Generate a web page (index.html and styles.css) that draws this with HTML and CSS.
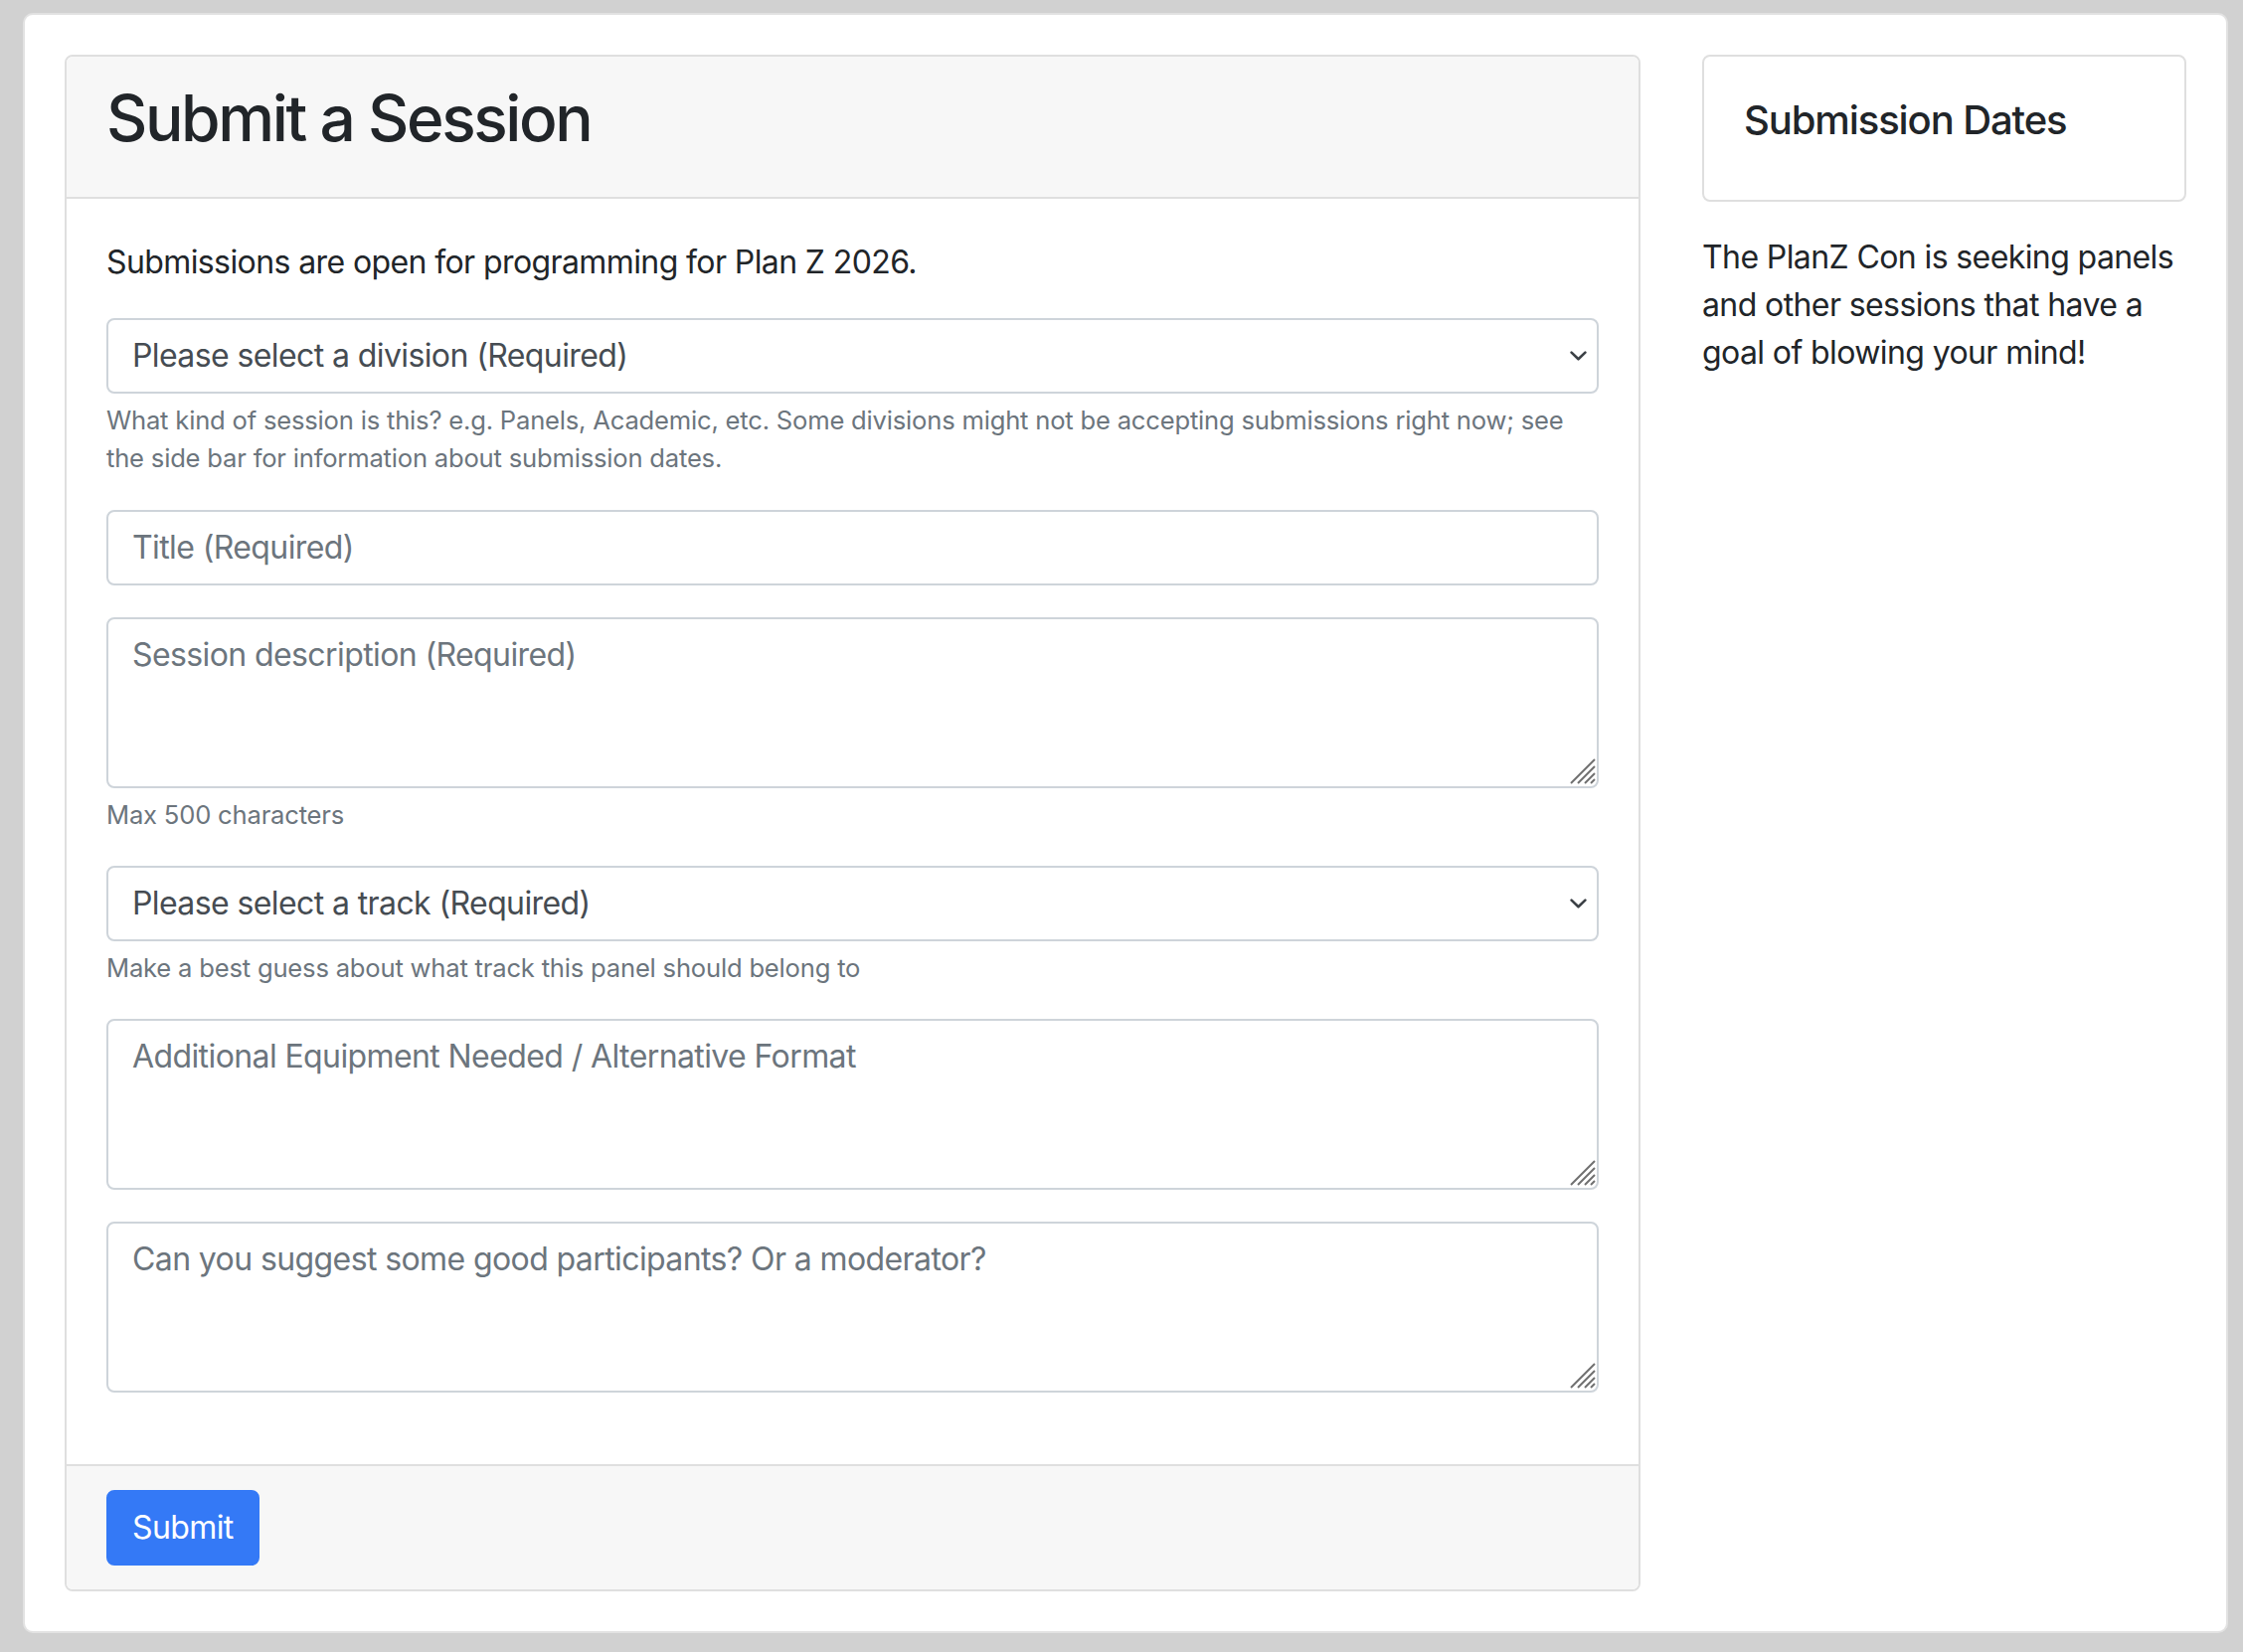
FILE: index.html
```html
<!DOCTYPE html>
<html lang="en">
<head>
<meta charset="utf-8">
<title>Submit a Session</title>
<link rel="stylesheet" href="styles.css">
</head>
<body>
<div class="page">
  <div class="layout">
    <div class="card main-card">
      <div class="card-header">
        <h2 class="page-title">Submit a Session</h2>
      </div>
      <div class="card-body">
        <p class="intro">Submissions are open for programming for Plan Z 2026.</p>
        <div class="group">
          <div class="select">
            <span class="select-text">Please select a division (Required)</span>
            <svg class="chevron" width="17" height="10" viewBox="0 0 17 10"><path d="M1.6 1.6 L8.5 8.3 L15.4 1.6" fill="none" stroke="#3c4146" stroke-width="2.6" stroke-linecap="round" stroke-linejoin="round"/></svg>
          </div>
          <small class="help">What kind of session is this? e.g. Panels, Academic, etc. Some divisions might not be accepting submissions right now; see the side bar for information about submission dates.</small>
        </div>
        <div class="group">
          <input class="field" type="text" placeholder="Title (Required)">
        </div>
        <div class="group">
          <div class="area-wrap">
            <textarea class="field area" placeholder="Session description (Required)"></textarea>
            <svg class="grip" width="26" height="26" viewBox="0 0 26 26"><path d="M1 25 L25 1 M8 25 L25 8 M15 25 L25 15 M21 25 L25 21" stroke="#707070" stroke-width="2" fill="none"/></svg>
          </div>
          <small class="help">Max 500 characters</small>
        </div>
        <div class="group">
          <div class="select">
            <span class="select-text">Please select a track (Required)</span>
            <svg class="chevron" width="17" height="10" viewBox="0 0 17 10"><path d="M1.6 1.6 L8.5 8.3 L15.4 1.6" fill="none" stroke="#3c4146" stroke-width="2.6" stroke-linecap="round" stroke-linejoin="round"/></svg>
          </div>
          <small class="help">Make a best guess about what track this panel should belong to</small>
        </div>
        <div class="group">
          <div class="area-wrap">
            <textarea class="field area" placeholder="Additional Equipment Needed / Alternative Format"></textarea>
            <svg class="grip" width="26" height="26" viewBox="0 0 26 26"><path d="M1 25 L25 1 M8 25 L25 8 M15 25 L25 15 M21 25 L25 21" stroke="#707070" stroke-width="2" fill="none"/></svg>
          </div>
        </div>
        <div class="group">
          <div class="area-wrap">
            <textarea class="field area" placeholder="Can you suggest some good participants? Or a moderator?"></textarea>
            <svg class="grip" width="26" height="26" viewBox="0 0 26 26"><path d="M1 25 L25 1 M8 25 L25 8 M15 25 L25 15 M21 25 L25 21" stroke="#707070" stroke-width="2" fill="none"/></svg>
          </div>
        </div>
      </div>
      <div class="card-footer">
        <button class="btn" type="button">Submit</button>
      </div>
    </div>
    <aside class="sidebar">
      <div class="card side-card">
        <h5 class="side-title">Submission Dates</h5>
      </div>
      <p class="side-text">The PlanZ Con is seeking panels and other sessions that have a goal of blowing your mind!</p>
    </aside>
  </div>
</div>
</body>
</html>
```
FILE: styles.css
```css
html, body {
  margin: 0;
  padding: 0;
}
body {
  background: #d1d1d1;
  font-family: Inter, "Liberation Sans", sans-serif;
  font-size: 32px;
  line-height: 48px;
  letter-spacing: -0.6px;
  color: #212529;
}
.page {
  margin: 13px 15px 20px 23px;
  background: #ffffff;
  border: 2px solid #e2e2e2;
  border-radius: 10px;
  padding: 40px;
}
.layout {
  display: grid;
  grid-template-columns: 1585fr 487fr;
  column-gap: 62px;
  align-items: start;
}
.card {
  border: 2px solid #dfdfdf;
  border-radius: 8px;
  background: #ffffff;
}
.card-header {
  background: #f7f7f7;
  border-bottom: 2px solid #dfdfdf;
  padding: 24px 40px;
  border-radius: 6px 6px 0 0;
}
.page-title {
  margin: 0 0 16px 0;
  font-size: 64px;
  line-height: 76.8px;
  font-weight: 500;
  letter-spacing: -2.4px;
  color: #212529;
}
.card-body {
  padding: 40px;
}
.intro {
  margin: 0 0 32px 0;
}
.group {
  margin-bottom: 32px;
}
.select {
  box-sizing: border-box;
  height: 76px;
  border: 2px solid #ced4da;
  border-radius: 8px;
  display: flex;
  align-items: center;
  padding: 0 10px 0 24px;
  color: #464c52;
  background: #ffffff;
}
.select-text {
  flex: 1;
}
.chevron {
  display: block;
}
.field {
  display: block;
  box-sizing: border-box;
  width: 100%;
  height: 76px;
  margin: 0;
  border: 2px solid #ced4da;
  border-radius: 8px;
  padding: 12px 24px;
  font-family: Inter, "Liberation Sans", sans-serif;
  font-size: 32px;
  line-height: 48px;
  letter-spacing: -0.6px;
  color: #495057;
  background: #ffffff;
  outline: none;
}
.field::placeholder {
  color: #6c757d;
  opacity: 1;
}
.area-wrap {
  position: relative;
}
.area {
  height: 172px;
  resize: none;
}
.grip {
  position: absolute;
  right: 3px;
  bottom: 4px;
  display: block;
}
.help {
  display: block;
  margin-top: 8px;
  font-size: 25.6px;
  line-height: 38.4px;
  letter-spacing: -0.2px;
  color: #6c757d;
}
.card-footer {
  background: #f7f7f7;
  border-top: 2px solid #dfdfdf;
  padding: 24px 40px;
  border-radius: 0 0 6px 6px;
}
.btn {
  display: block;
  box-sizing: border-box;
  height: 76px;
  padding: 12px 24px;
  border: 2px solid #3479f6;
  border-radius: 8px;
  background: #3479f6;
  color: #ffffff;
  font-family: Inter, "Liberation Sans", sans-serif;
  font-size: 32px;
  line-height: 48px;
  letter-spacing: -0.6px;
}
.side-card {
  padding: 40px;
}
.side-title {
  margin: 0 0 16px 0;
  font-size: 40px;
  line-height: 48px;
  font-weight: 500;
  letter-spacing: -1.1px;
  color: #212529;
}
.side-text {
  margin: 32px 0 0 0;
}
```
